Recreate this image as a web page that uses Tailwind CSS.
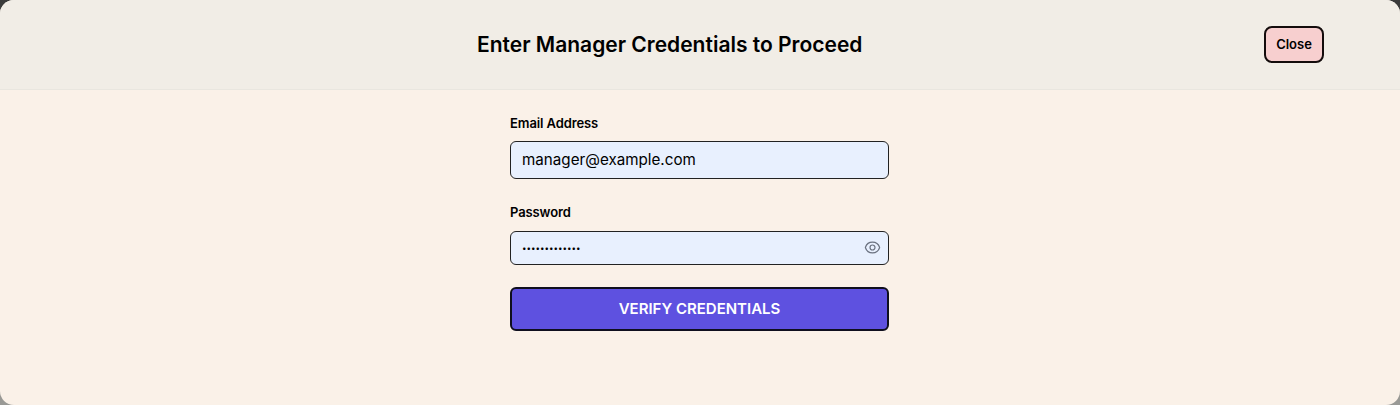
<!DOCTYPE html>
<html lang="en">

<head>
    <meta charset="UTF-8">
    <meta name="viewport" content="width=device-width, initial-scale=1.0">
    <title>Manager Credentials</title>
    <script src="https://cdn.jsdelivr.net/npm/@tailwindcss/browser@4"></script>
</head>

<body class="h-[405px] overflow-hidden bg-[linear-gradient(#3a3a3a,#9a9a96)] font-['Inter',sans-serif] text-black">
    <div class="flex h-[405px] flex-col overflow-hidden rounded-[14px] bg-[#faf1e8]">
        <!-- header -->
        <header class="flex h-[90px] shrink-0 items-center border-b border-[#e9e6df] bg-[#f1ede6] pl-[477px] pr-[76px]">
            <h1 class="text-[21px] leading-7 font-semibold whitespace-nowrap">Enter Manager Credentials to Proceed</h1>
            <button class="ml-auto h-[37px] w-[60px] rounded-lg border-2 border-[#140c0c] bg-[#f7cfcf] text-[13px] font-semibold">Close</button>
        </header>

        <!-- form -->
        <form class="mt-[24px] ml-[510px] flex w-[379px] flex-col">
            <label class="mb-[9px] text-[13px] leading-[18px] font-semibold tracking-[-0.1px]">Email Address</label>
            <input type="text" value="manager@example.com"
                class="mb-[24px] h-[38px] rounded-md border-[1.5px] border-[#222] bg-[#e8f0fe] pb-[2px] pl-[11px] text-[15.2px] text-black">
            <label class="mb-[10px] text-[13px] leading-[18px] font-semibold tracking-[-0.1px]">Password</label>
            <div class="relative mb-[22px]">
                <input type="password" value="manager123456"
                    class="h-[34px] w-full rounded-md border-[1.5px] border-[#222] bg-[#e8f0fe] px-[11px] text-[8px] text-black">
                <svg class="absolute top-[8px] right-[8px] h-[17px] w-[17px] text-[#6b7280]" viewBox="0 0 24 24" fill="none" stroke="currentColor" stroke-width="1.7" stroke-linecap="round" stroke-linejoin="round">
                    <path d="M2.04 12.32a1 1 0 0 1 0-.64C3.42 7.51 7.36 4.5 12 4.5c4.64 0 8.57 3 9.96 7.18a1 1 0 0 1 0 .64C20.58 16.49 16.64 19.5 12 19.5c-4.64 0-8.57-3-9.96-7.18Z" />
                    <path d="M15.5 12a3.5 3.5 0 1 1-7 0 3.5 3.5 0 0 1 7 0Z" />
                </svg>
            </div>
            <button type="button" class="h-[44px] rounded-md border-2 border-[#0f0f1e] bg-[#5e51e0] text-[15px] font-semibold text-white">VERIFY CREDENTIALS</button>
        </form>
    </div>
</body>

</html>
